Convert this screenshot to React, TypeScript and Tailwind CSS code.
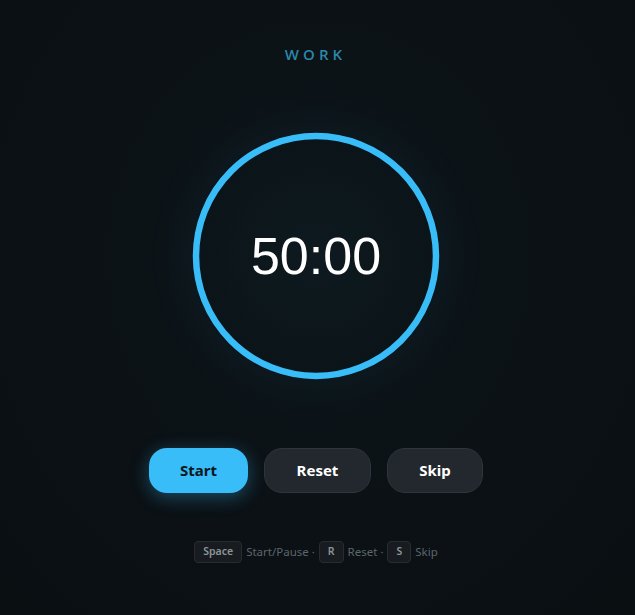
import React from 'react'

const RADIUS = 120

function Ring() {
  return (
    <div className="relative flex h-[248px] w-[248px] items-center justify-center rounded-full bg-[radial-gradient(circle,#0e1a20_0%,#0b1418_70%)] shadow-[0_0_60px_rgba(56,189,248,0.06)]">
      <svg className="absolute inset-0" width={248} height={248} viewBox="0 0 248 248">
        <circle cx={124} cy={124} r={RADIUS} fill="none" stroke="#38bdf8" strokeWidth={6.5} />
      </svg>
      <span className="relative font-['Liberation_Sans',Arial,sans-serif] text-[52px] leading-none text-white">
        50:00
      </span>
    </div>
  )
}

function Key({ children }: { children: React.ReactNode }) {
  return (
    <kbd className="rounded border border-[#272c31] bg-[#181c20] px-2 py-[2px] font-['Noto_Sans',sans-serif] text-[10.5px] font-semibold text-[#8b949b]">
      {children}
    </kbd>
  )
}

export default function App() {
  return (
    <div className="flex min-h-[615px] w-full flex-col items-center bg-[radial-gradient(ellipse_at_50%_42%,#0e171c_0%,#0b1115_55%,#0a0f12_100%)] pr-[3px] pt-[44px] font-['Noto_Sans',sans-serif]">
      <div className="mr-[1px] font-['Open_Sans',sans-serif] text-[15px] font-semibold leading-5 tracking-[0.27em] text-[#2b87aa]">
        WORK
      </div>

      <div className="mt-[68px]">
        <Ring />
      </div>

      <div className="mt-[68px] flex gap-4">
        <button className="h-[45px] w-[99px] rounded-[18px] bg-[#38bdf8] text-[15px] font-bold text-[#0b1820] shadow-[0_4px_18px_rgba(56,189,248,0.35)]">
          Start
        </button>
        <button className="h-[45px] w-[107px] rounded-[18px] border border-[#2e353b] bg-[#22282d] text-[15px] font-bold text-white">
          Reset
        </button>
        <button className="h-[45px] w-[96px] rounded-[18px] border border-[#2e353b] bg-[#22282d] text-[15px] font-bold text-white">
          Skip
        </button>
      </div>

      <div className="mt-[48px] flex items-center gap-1 text-[11.5px] text-[#5d656c]">
        <Key>Space</Key>
        <span>Start/Pause ·</span>
        <Key>R</Key>
        <span>Reset ·</span>
        <Key>S</Key>
        <span>Skip</span>
      </div>
    </div>
  )
}
